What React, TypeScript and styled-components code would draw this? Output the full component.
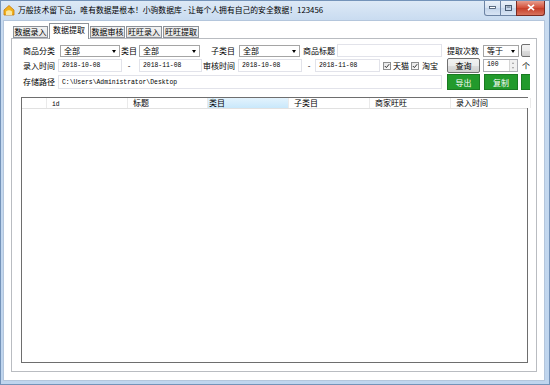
import React from 'react';
import styled, { createGlobalStyle } from 'styled-components';

const cjk = `"Noto Sans CJK SC", "Noto Sans", sans-serif`;
const mono = `"Liberation Mono", "DejaVu Sans Mono", monospace`;

const GlobalStyle = createGlobalStyle`
  html, body { margin: 0; padding: 0; background: #fff; }
  body { font-family: ${cjk}; font-size: 8px; color: #000; }
  * { box-sizing: border-box; }
`;

const Window = styled.div`
  width: 550px;
  height: 385px;
  display: flex;
  flex-direction: column;
  background: linear-gradient(#dde9f6, #c8dbf0 20px, #bfd5ee);
  border: 1px solid #7493b9;
  overflow: hidden;
`;

const TitleBar = styled.div`
  height: 19px;
  display: flex;
  align-items: flex-start;
  position: relative;
`;

const TitleIcon = styled.svg`
  margin: 3px 0 0 2px;
  width: 12px;
  height: 12px;
`;

const TitleText = styled.div`
  margin: 4px 0 0 3px;
  font-size: 7.8px;
  line-height: 10px;
  color: #000;
  white-space: nowrap;
`;

const Controls = styled.div`
  margin-left: auto;
  margin-right: 4px;
  display: flex;
  height: 17px;
  margin-top: -1px;
`;

const CtlButton = styled.div<{ $close?: boolean; $w: number }>`
  width: ${(p) => p.$w}px;
  height: 16px;
  border: 1px solid ${(p) => (p.$close ? '#7a2b22' : '#6d84a4')};
  border-top: none;
  margin-left: -1px;
  display: flex;
  align-items: center;
  justify-content: center;
  background: ${(p) =>
    p.$close
      ? 'linear-gradient(#e9a99b, #d4533d 50%, #c33a24 51%, #d8735d)'
      : 'linear-gradient(#eef3fa, #d7e3f2 50%, #c3d4ea 51%, #d7e4f4)'};
  border-radius: ${(p) => (p.$close ? '0 0 3px 0' : '0')};
  &:first-child { border-radius: 0 0 0 3px; }
`;

const Client = styled.div`
  flex: 1;
  margin: 0 4px 3px 2px;
  background: #fff;
  border: 1px solid #b4c6dc;
  display: flex;
  flex-direction: column;
  padding: 2px 7px 8px 7px;
`;

const TabStrip = styled.div`
  height: 15px;
  display: flex;
  align-items: flex-end;
  padding-left: 2px;
  position: relative;
  z-index: 1;
`;

const Tab = styled.div<{ $active?: boolean; $w: number }>`
  width: ${(p) => p.$w}px;
  height: ${(p) => (p.$active ? 16 : 12)}px;
  margin-bottom: ${(p) => (p.$active ? -1 : 0)}px;
  margin-right: 1px;
  border: 1px solid #8d9299;
  border-bottom: ${(p) => (p.$active ? 'none' : '1px solid #8d9299')};
  background: ${(p) => (p.$active ? '#fff' : 'linear-gradient(#f3f3f3, #e3e3e3)')};
  font-size: 8px;
  line-height: ${(p) => (p.$active ? 12 : 10)}px;
  text-align: center;
  white-space: nowrap;
`;

const TabPage = styled.div`
  flex: 1;
  border: 1px solid #b9bcc1;
  display: flex;
  flex-direction: column;
  padding: 5px 8px 8px 9px;
  min-height: 0;
`;

const Form = styled.div`
  margin-right: -2px;
  overflow: hidden;
  display: flex;
  flex-direction: column;
  gap: 1px;
`;

const Row = styled.div<{ $h: number }>`
  height: ${(p) => p.$h}px;
  display: flex;
  align-items: center;
  flex-shrink: 0;
  white-space: nowrap;
`;

const Label = styled.span<{ $ml?: number; $w?: number }>`
  margin-left: ${(p) => p.$ml ?? 0}px;
  width: ${(p) => (p.$w ? `${p.$w}px` : 'auto')};
  flex-shrink: 0;
  font-size: 8px;
  line-height: 10px;
`;

const Combo = styled.div<{ $ml?: number; $w: number }>`
  margin-left: ${(p) => p.$ml ?? 0}px;
  width: ${(p) => p.$w}px;
  height: 12px;
  flex-shrink: 0;
  border: 1px solid #a5a5a5;
  background: #fff;
  display: flex;
  align-items: center;
  padding-left: 3px;
  position: relative;
  font-size: 8px;
  &::after {
    content: '';
    position: absolute;
    right: 3px;
    top: 4px;
    border-left: 2.5px solid transparent;
    border-right: 2.5px solid transparent;
    border-top: 3px solid #000;
  }
`;

const TextBox = styled.div<{ $ml?: number; $w: number; $h?: number }>`
  margin-left: ${(p) => p.$ml ?? 0}px;
  width: ${(p) => p.$w}px;
  height: ${(p) => p.$h ?? 13}px;
  flex-shrink: 0;
  border: 1px solid #e2e3ea;
  background: #fff;
  display: flex;
  align-items: center;
  padding-left: 3px;
  font-family: ${mono};
  font-size: 6.4px;
  color: #000;
`;

const Dash = styled.span<{ $w: number }>`
  width: ${(p) => p.$w}px;
  flex-shrink: 0;
  padding-left: 5px;
  font-family: ${mono};
  font-size: 7px;
`;

const Check = styled.div<{ $ml?: number }>`
  margin-left: ${(p) => p.$ml ?? 0}px;
  width: 8px;
  height: 8px;
  flex-shrink: 0;
  border: 1px solid #8e8f8f;
  background: linear-gradient(135deg, #e5e5e5, #fcfcfc);
  display: flex;
  align-items: center;
  justify-content: center;
`;

const Button = styled.div<{ $ml?: number; $w: number; $green?: boolean; $h?: number }>`
  margin-left: ${(p) => p.$ml ?? 0}px;
  width: ${(p) => p.$w}px;
  height: ${(p) => p.$h ?? 15}px;
  flex-shrink: 0;
  border: 1px solid ${(p) => (p.$green ? '#1a7a22' : '#707070')};
  border-radius: ${(p) => (p.$green ? 0 : 2)}px;
  background: ${(p) => (p.$green ? '#229a2c' : 'linear-gradient(#f2f2f2, #ebebeb 50%, #dddddd 51%, #cfcfcf)')};
  color: ${(p) => (p.$green ? '#fff' : '#000')};
  display: flex;
  align-items: center;
  justify-content: center;
  font-size: 8px;
`;

const Numeric = styled.div<{ $ml?: number }>`
  margin-left: ${(p) => p.$ml ?? 0}px;
  width: 35px;
  height: 13px;
  flex-shrink: 0;
  border: 1px solid #abadb3;
  display: flex;
  align-items: stretch;
  font-family: ${mono};
  font-size: 6.4px;
`;

const NumValue = styled.span`
  flex: 1;
  padding: 1px 0 0 3px;
`;

const Spinner = styled.div`
  width: 8px;
  display: flex;
  flex-direction: column;
  border-left: 1px solid #d6d6d6;
`;

const SpinPart = styled.div<{ $up?: boolean }>`
  flex: 1;
  background: #f0f0f0;
  position: relative;
  &::after {
    content: '';
    position: absolute;
    left: 2px;
    top: ${(p) => (p.$up ? 1.5 : 1)}px;
    border-left: 1.5px solid transparent;
    border-right: 1.5px solid transparent;
    ${(p) => (p.$up ? 'border-bottom: 2px solid #999;' : 'border-top: 2px solid #999;')}
  }
`;

const ListView = styled.div`
  margin-top: 7px;
  flex: 1;
  border: 1px solid #6e6e6e;
  background: #fff;
  display: flex;
  flex-direction: column;
`;

const Header = styled.div`
  height: 11px;
  display: flex;
  border-bottom: 1px solid #e1e1e1;
`;

const HeaderCell = styled.div<{ $w: number; $sel?: boolean }>`
  width: ${(p) => p.$w}px;
  flex-shrink: 0;
  padding-left: ${(p) => (p.$sel ? 1 : 5)}px;
  font-size: 8px;
  line-height: 10px;
  border-right: 1px solid #eaeaea;
  background: ${(p) => (p.$sel ? 'linear-gradient(#e3f3fd, #c9e8fb)' : '#fff')};
`;

const IdText = styled.span`
  font-family: ${mono};
  font-size: 6.4px;
`;

const CheckMark = () => (
  <svg width="6" height="6" viewBox="0 0 6 6">
    <path d="M0.8 3 L2.4 4.6 L5.2 1.2" fill="none" stroke="#333" strokeWidth="1" />
  </svg>
);

export default function App() {
  return (
    <>
      <GlobalStyle />
      <Window>
        <TitleBar>
          <TitleIcon viewBox="0 0 12 12">
            <path d="M1 11 L1 6 L6 1.5 L11 6 L11 11 Z" fill="#f0b21e" stroke="#c77a0c" strokeWidth="0.8" />
            <path d="M3 11 L3 7.5 Q6 5 9 7.5 L9 11 Z" fill="#fbe7a0" />
          </TitleIcon>
          <TitleText>万般技术留下品，唯有数据是根本！小驹数据库 - 让每个人拥有自己的安全数据！123456</TitleText>
          <Controls>
            <CtlButton $w={17}>
              <svg width="7" height="3" viewBox="0 0 7 3">
                <rect x="0.5" y="0.5" width="6" height="2" fill="#fff" stroke="#3b4e66" strokeWidth="0.8" />
              </svg>
            </CtlButton>
            <CtlButton $w={17}>
              <svg width="7" height="6" viewBox="0 0 7 6">
                <rect x="0.5" y="0.5" width="6" height="5" fill="none" stroke="#3b4e66" strokeWidth="0.9" />
                <rect x="1.5" y="1.6" width="4" height="0.9" fill="#3b4e66" />
              </svg>
            </CtlButton>
            <CtlButton $w={29} $close>
              <svg width="8" height="7" viewBox="0 0 8 7">
                <path d="M1 0.8 L7 6.2 M7 0.8 L1 6.2" stroke="#fff" strokeWidth="1.6" />
              </svg>
            </CtlButton>
          </Controls>
        </TitleBar>
        <Client>
          <TabStrip>
            <Tab $w={35}>数据录入</Tab>
            <Tab $w={40} $active>数据提取</Tab>
            <Tab $w={35}>数据审核</Tab>
            <Tab $w={36}>旺旺录入</Tab>
            <Tab $w={36}>旺旺提取</Tab>
          </TabStrip>
          <TabPage>
            <Form>
              <Row $h={13}>
                <Label $ml={2} $w={37}>商品分类</Label>
                <Combo $w={60}>全部</Combo>
                <Label $ml={1} $w={18}>类目</Label>
                <Combo $w={61}>全部</Combo>
                <Label $ml={11} $w={28}>子类目</Label>
                <Combo $w={61}>全部</Combo>
                <Label $ml={3} $w={34}>商品标题</Label>
                <TextBox $w={105} />
                <Label $ml={5} $w={36}>提取次数</Label>
                <Combo $w={36}>等于</Combo>
                <Button $ml={2} $w={20} $h={13} />
              </Row>
              <Row $h={15}>
                <Label $ml={2} $w={35}>录入时间</Label>
                <TextBox $w={64}>2018-10-08</TextBox>
                <Dash $w={17}>-</Dash>
                <TextBox $w={63}>2018-11-08</TextBox>
                <Label $ml={1} $w={35}>审核时间</Label>
                <TextBox $w={64}>2018-10-08</TextBox>
                <Dash $w={13}>-</Dash>
                <TextBox $w={65}>2018-11-08</TextBox>
                <Check $ml={3}>
                  <CheckMark />
                </Check>
                <Label $ml={2} $w={16}>天猫</Label>
                <Check $ml={2}>
                  <CheckMark />
                </Check>
                <Label $ml={3} $w={16}>淘宝</Label>
                <Button $ml={9} $w={33}>查询</Button>
                <Numeric $ml={3}>
                  <NumValue>100</NumValue>
                  <Spinner>
                    <SpinPart $up />
                    <SpinPart />
                  </Spinner>
                </Numeric>
                <Label $ml={4}>个</Label>
              </Row>
              <Row $h={16}>
                <Label $ml={2} $w={35}>存储路径</Label>
                <TextBox $w={384} $h={14}>C:\Users\Administrator\Desktop</TextBox>
                <Button $ml={5} $w={33} $h={16} $green>导出</Button>
                <Button $ml={4} $w={34} $h={16} $green>复制</Button>
                <Button $ml={3} $w={34} $h={16} $green />
              </Row>
            </Form>
            <ListView>
              <Header>
                <HeaderCell $w={25} />
                <HeaderCell $w={81}>
                  <IdText>id</IdText>
                </HeaderCell>
                <HeaderCell $w={80}>标题</HeaderCell>
                <HeaderCell $w={81} $sel>类目</HeaderCell>
                <HeaderCell $w={81}>子类目</HeaderCell>
                <HeaderCell $w={81}>商家旺旺</HeaderCell>
                <HeaderCell $w={80}>录入时间</HeaderCell>
              </Header>
            </ListView>
          </TabPage>
        </Client>
      </Window>
    </>
  );
}
